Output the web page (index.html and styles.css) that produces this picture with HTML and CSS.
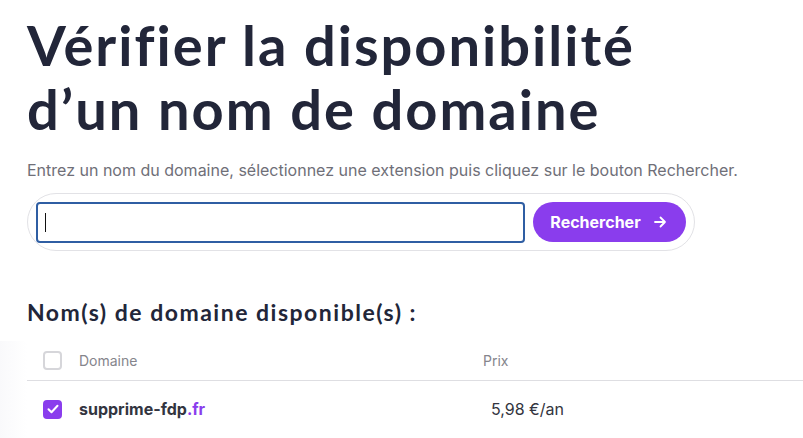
FILE: index.html
```html
<!DOCTYPE html>
<html lang="fr">
<head>
<meta charset="utf-8">
<link rel="stylesheet" href="styles.css">
</head>
<body>
<main class="page">
  <h1 class="title">Vérifier la disponibilité<br>d’un nom de domaine</h1>
  <p class="lead">Entrez un nom du domaine, sélectionnez une extension puis cliquez sur le bouton Rechercher.</p>
  <form class="search">
    <label class="field">
      <input class="search-input" type="text">
      <span class="caret"></span>
    </label>
    <button class="search-btn" type="button">Rechercher <span class="arrow"><svg width="14" height="14" viewBox="0 0 14 14"><path d="M2 7h10M7.5 2.5L12 7l-4.5 4.5" fill="none" stroke="#fff" stroke-width="1.8" stroke-linecap="round" stroke-linejoin="round"/></svg></span></button>
  </form>
  <h2 class="subtitle">Nom(s) de domaine disponible(s) :</h2>
  <div class="table">
    <div class="row head">
      <span class="cb"></span>
      <span class="col-domain">Domaine</span>
      <span class="col-price">Prix</span>
    </div>
    <div class="row item">
      <span class="cb checked"><svg width="12" height="10" viewBox="0 0 12 10"><path d="M1.5 5.2l3 3L10.5 1.8" fill="none" stroke="#fff" stroke-width="2" stroke-linecap="round" stroke-linejoin="round"/></svg></span>
      <span class="col-domain name">supprime-fdp<span class="ext">.fr</span></span>
      <span class="col-price price">5,98 €/an</span>
    </div>
  </div>
</main>
</body>
</html>
```
FILE: styles.css
```css
* { box-sizing: border-box; }
html, body { margin: 0; background: #fff; }
body { font-family: Inter, "Noto Sans", sans-serif; color: #222639; overflow: hidden; }
.page { padding: 13px 0 0 27px; }
.title {
  font-family: Lato, "Noto Sans", sans-serif;
  font-weight: 700;
  font-size: 56px;
  line-height: 64px;
  letter-spacing: 2px;
  margin: 0;
  color: #222639;
}
.lead { margin: 19px 0 0; font-size: 16px; line-height: 20px; color: #6f6f78; }
.search {
  margin-top: 13px;
  width: 668px;
  height: 58px;
  border: 1px solid #e2e2e6;
  border-radius: 29px;
  display: flex;
  align-items: center;
  padding: 0 8px 0 8px;
  gap: 8px;
}
.field { position: relative; display: flex; }
.search-input {
  width: 489px;
  height: 41px;
  border: 2px solid #2f5ea3;
  border-radius: 4px;
  outline: none;
  font-size: 16px;
  padding: 0 8px;
}
.caret { position: absolute; left: 9px; top: 11px; width: 1px; height: 19px; background: #111; }
.search-btn {
  width: 154px;
  height: 40px;
  border: none;
  border-radius: 20px;
  background: #8a3ded;
  color: #fff;
  font-family: Inter, sans-serif;
  font-weight: 700;
  font-size: 16px;
  display: flex;
  align-items: center;
  justify-content: center;
  gap: 12px;
  padding: 0 2px 0 0;
}
.arrow { display: flex; }
.subtitle {
  margin: 47px 0 0;
  font-family: Lato, sans-serif;
  font-weight: 700;
  font-size: 23px;
  line-height: 28px;
  letter-spacing: 1.5px;
}
.table {
  margin: 15px 0 0 -27px;
  padding-left: 27px;
  background: linear-gradient(to right, #f9f9fb, #ffffff 27px);
  height: 110px;
}
.row { display: flex; align-items: center; }
.head { height: 40px; border-bottom: 1px solid #dedee2; font-size: 14px; color: #85858c; background: #fff; }
.item { height: 56px; font-size: 16px; background: #fff; }
.cb { width: 19px; height: 19px; border: 2px solid #d6d6da; border-radius: 4px; margin-left: 16px; display: flex; align-items: center; justify-content: center; }
.cb.checked { background: #8a3ded; border-color: #8a3ded; }
.col-domain { margin-left: 17px; width: 404px; }
.name { font-weight: 700; color: #333540; }
.ext { color: #8a3ded; }
.price { margin-left: 8px; color: #333540; }
```
